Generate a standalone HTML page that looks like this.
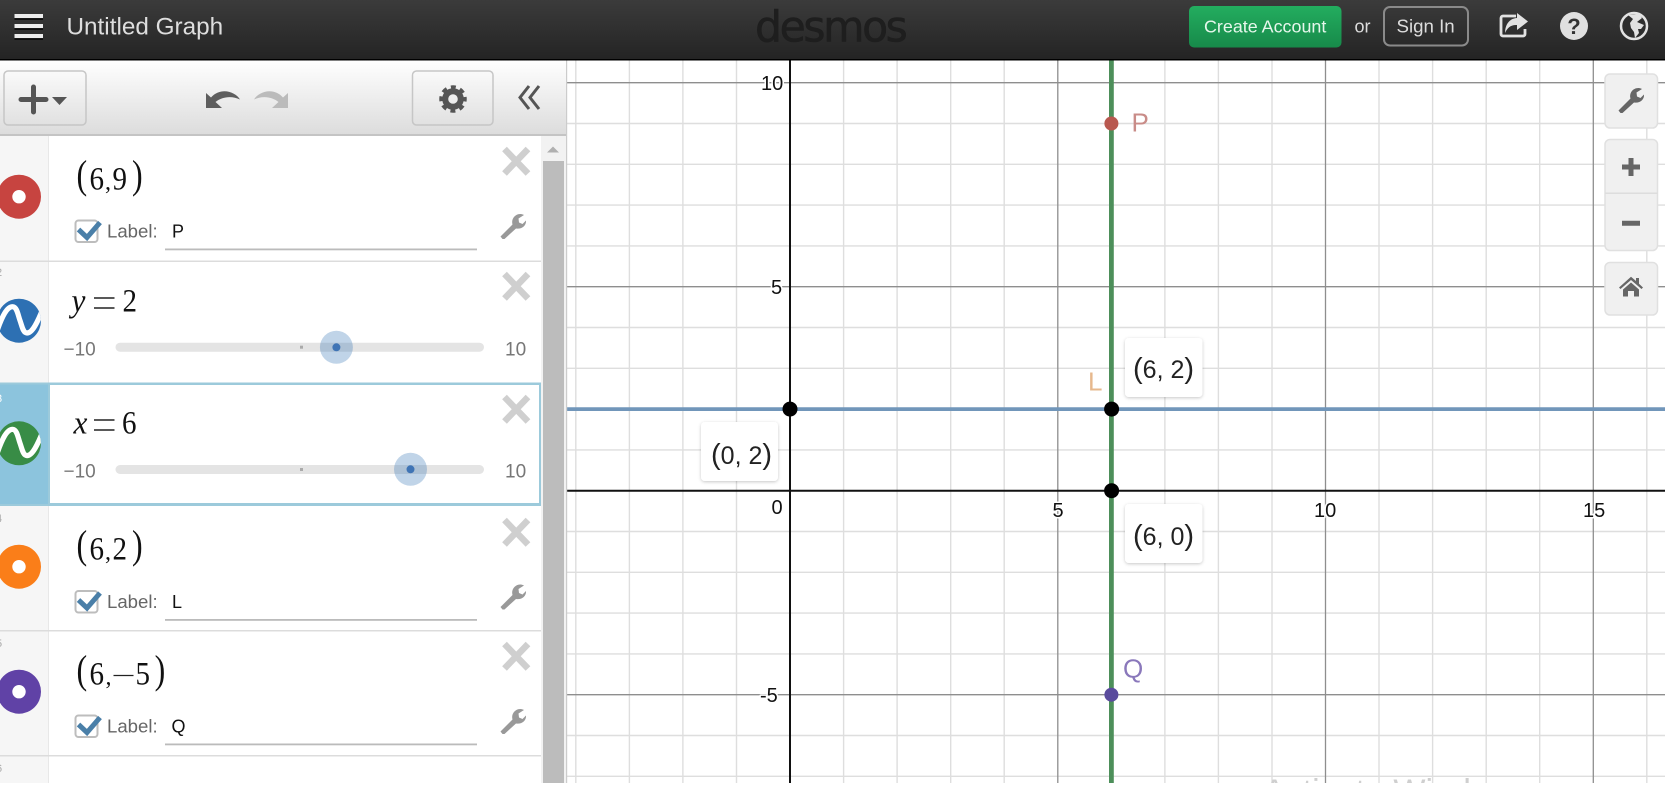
<!DOCTYPE html>
<html lang="en"><head><meta charset="utf-8"><title>Untitled Graph - Desmos</title>
<style>
html,body{margin:0;padding:0;background:#fff;width:1672px;height:804px;overflow:hidden}
svg{display:block;position:absolute;left:0;top:0}
text{font-family:"Liberation Sans",sans-serif}
.m{font-family:"Liberation Serif",serif;font-size:33px;fill:#111}
.c{font-family:"Liberation Serif",serif;font-size:24px;fill:#111}
.p{font-family:"Liberation Serif",serif;font-size:40px;fill:#111}
.l{font-size:18.6px;fill:#666}
.v{font-size:18px;fill:#111}
.s{font-size:19px;fill:#777}
.a{font-size:20px;fill:#111;stroke:#fff;stroke-width:3px;paint-order:stroke;stroke-linejoin:round}
.b{font-size:25px;fill:#222}
.b tspan{font-size:29px;font-weight:normal}
.n{font-size:11px;fill:#aaa}
</style></head><body>
<svg width="1672" height="804" viewBox="0 0 1672 804" xmlns="http://www.w3.org/2000/svg">
<defs>
<linearGradient id="hd" x1="0" y1="0" x2="0" y2="1"><stop offset="0" stop-color="#3b3b3b"/><stop offset="1" stop-color="#242424"/></linearGradient>
<linearGradient id="tb" x1="0" y1="0" x2="0" y2="1"><stop offset="0" stop-color="#fff"/><stop offset="1" stop-color="#dcdcdc"/></linearGradient>
<linearGradient id="gr" x1="0" y1="0" x2="0" y2="1"><stop offset="0" stop-color="#23ad5f"/><stop offset="1" stop-color="#178a4a"/></linearGradient>
<path id="wr" d="M2.500 25.500 L0.500 23 L12.500 11 C11 6 14.500 0.500 20.500 0.500 C22 0.500 23 1 24 1.500 L18.500 5 L19 9 L22.500 10.500 L26 7 C26.500 12 22 16 16 15 L4.500 25.500 Z"/>
<path id="xx" d="M2 2 L25.500 26.500 M25.500 2 L2 26.500" fill="none" stroke="#cfcfcf" stroke-width="6.500"/>
<clipPath id="pg"><rect x="0" y="0" width="1665" height="783"/></clipPath>
<clipPath id="gc"><rect x="566" y="60" width="1099" height="723"/></clipPath>
<clipPath id="c2"><circle cx="19" cy="320.700" r="22"/></clipPath>
<clipPath id="c3"><circle cx="19" cy="443.300" r="22"/></clipPath>
<filter id="sh" x="-10%" y="-10%" width="120%" height="125%"><feDropShadow dx="0" dy="1" stdDeviation="1.500" flood-color="#000" flood-opacity=".22"/></filter>
</defs>

<g clip-path="url(#pg)">
<!-- graph -->
<rect x="566" y="60" width="1099" height="723" fill="#fff"/>
<g clip-path="url(#gc)" fill="none">
<path stroke="#dedede" stroke-width="1.400" d="M575.800 60V783M629.400 60V783M682.900 60V783M736.500 60V783M843.600 60V783M897.100 60V783M950.700 60V783M1004.200 60V783M1164.900 60V783M1218.400 60V783M1272 60V783M1379 60V783M1432.600 60V783M1486.200 60V783M1539.700 60V783M1646.800 60V783M567 123.500H1665M567 164.300H1665M567 205.100H1665M567 245.900H1665M567 327.500H1665M567 368.300H1665M567 449.900H1665M567 531.500H1665M567 572.300H1665M567 613.100H1665M567 653.900H1665M567 735.500H1665M567 776.300H1665"/>
<path stroke="#8e8e8e" stroke-width="1.300" d="M1057.800 60V783M1325.500 60V783M1593.300 60V783M567 82.700H1665M567 286.700H1665M567 694.700H1665"/>
<path stroke="#111" stroke-width="2" d="M790 60V783M567 490.700H1665"/>
<path stroke="#7196ba" stroke-width="3.800" d="M567 409.100H1665"/>
<path stroke="#4d8f5a" stroke-width="4.800" d="M1111.400 60V783"/>
</g>
<text x="1263" y="803" font-size="34" fill="#cfcfcf" clip-path="url(#gc)">Activate Windows</text>

<text class="a" x="761" y="90">10</text>
<text class="a" x="771" y="294">5</text>
<text class="a" x="760" y="702">-5</text>
<text class="a" x="771.500" y="514">0</text>
<text class="a" x="1052.500" y="517">5</text>
<text class="a" x="1314" y="517">10</text>
<text class="a" x="1583" y="517">15</text>

<circle cx="1111.400" cy="123.500" r="7" fill="#b8584f"/>
<circle cx="1111.400" cy="694.700" r="7" fill="#5a4b9d"/>
<text x="1131.500" y="131.700" font-size="26" fill="#c98c88">P</text>
<text x="1123" y="677.500" font-size="26" fill="#8a78bb">Q</text>
<text x="1088" y="390.700" font-size="26" fill="#e6b88d">L</text>

<circle cx="790" cy="409.100" r="7.500" fill="#000"/>
<circle cx="1111.600" cy="409.100" r="7.500" fill="#000"/>
<circle cx="1111.600" cy="490.700" r="7.500" fill="#000"/>

<g fill="#fff" filter="url(#sh)">
<rect x="1125" y="338" width="77.500" height="59" rx="4"/>
<rect x="701" y="422" width="77" height="59" rx="4"/>
<rect x="1125" y="504" width="77.500" height="59" rx="4"/>
</g>
<text class="b" x="1133" y="378"><tspan>(</tspan>6, 2<tspan>)</tspan></text>
<text class="b" x="711" y="464"><tspan>(</tspan>0, 2<tspan>)</tspan></text>
<text class="b" x="1133" y="545"><tspan>(</tspan>6, 0<tspan>)</tspan></text>

<!-- graph controls -->
<g fill="#f0f0f0" stroke="#e0e0e0" stroke-width="1.500">
<rect x="1605" y="74" width="52.500" height="54" rx="5"/>
<rect x="1605" y="139.500" width="52.500" height="111" rx="5"/>
<rect x="1605" y="262.500" width="52.500" height="52.500" rx="5"/>
</g>
<path d="M1605 193.300H1657.500" stroke="#ddd" stroke-width="1.500"/>
<use href="#wr" x="1618" y="87.500" fill="#666"/>
<path d="M1631 158V176M1622 167H1640M1622 223.300H1640" stroke="#666" stroke-width="5" fill="none"/>
<path d="M1619 287.500 L1631 276.700 L1636 281 V278 H1639 V283.700 L1643 287.500 L1641.500 289 L1631 280 L1620.500 289 Z M1623 289.500 L1631 282.500 L1639 289.500 V296.500 H1634 V291 H1628 V296.500 H1623 Z" fill="#666"/>

<!-- toolbar -->
<rect x="0" y="60" width="567" height="75" fill="url(#tb)"/>
<rect x="0" y="134" width="567" height="2" fill="#c4c4c4"/>
<rect x="566" y="60" width="1.200" height="723" fill="#ccc"/>
<rect x="4" y="71" width="82" height="54" rx="4" fill="none" stroke="#c6c6c6" stroke-width="1.500"/>
<rect x="412.500" y="71" width="80.500" height="54" rx="4" fill="none" stroke="#c6c6c6" stroke-width="1.500"/>
<path d="M33.500 87V112M21 99.500H46" stroke="#555" stroke-width="5" stroke-linecap="round"/>
<path d="M52 97H67L59.500 105Z" fill="#555"/>
<path d="M206 93 V108 H222 L215.500 102 C222 96.500 232 95.500 240 99.500 C235 91 220 87 211 97.500 Z" fill="#5e5e5e"/>
<path d="M288 93 V108 H272 L278.500 102 C272 96.500 262 95.500 254 99.500 C259 91 274 87 283 97.500 Z" fill="#bbb"/>
<circle cx="453" cy="99" r="7.800" fill="none" stroke="#555" stroke-width="6"/>
<circle cx="453" cy="99" r="12" fill="none" stroke="#555" stroke-width="3.500" stroke-dasharray="5 4.420" stroke-dashoffset="2.500"/>
<path d="M529 86 L520 97.500 L529 109M539 86 L530 97.500 L539 109" fill="none" stroke="#555" stroke-width="3"/>

<!-- list -->
<rect x="0" y="136" width="541" height="647" fill="#fff"/>
<rect x="0" y="136" width="48" height="647" fill="#f6f6f6"/>
<rect x="48" y="136" width="1" height="647" fill="#e8e8e8"/>
<rect x="541" y="136" width="25" height="647" fill="#f2f2f2"/>
<rect x="543" y="161" width="21" height="622" fill="#bcbcbc"/>
<path d="M547 152.500H559L553 146.500Z" fill="#b0b0b0"/>
<g fill="#dcdcdc">
<rect x="0" y="260.500" width="541" height="1.500"/>
<rect x="0" y="630" width="541" height="1.500"/>
<rect x="0" y="755" width="541" height="1.500"/>
</g>
<!-- focused row -->
<rect x="0" y="383" width="48" height="122" fill="#8cc4dd"/>
<rect x="49" y="384" width="491" height="120" fill="#fff" stroke="#9ccadb" stroke-width="2"/>
<rect x="0" y="382.500" width="541" height="2" fill="#9ccadb"/>
<rect x="0" y="504" width="541" height="2" fill="#9ccadb"/>

<!-- row numbers -->
<text class="n" x="-4" y="276">2</text>
<text class="n" x="-4" y="402" style="fill:#fff">3</text>
<text class="n" x="-4" y="522">4</text>
<text class="n" x="-4" y="647">5</text>
<text class="n" x="-4" y="772">6</text>

<!-- circles -->
<circle cx="19" cy="196.700" r="22" fill="#c74440"/><circle cx="19" cy="196.700" r="6.700" fill="#fff"/>
<circle cx="19" cy="320.700" r="22" fill="#2d70b3"/>
<path clip-path="url(#c2)" d="M-4 334 C2 316 7 306.500 12.700 306.700 C17 307 18 315 20 320.500 C22 326 23 333 27 333 C32 333 37 324 44 306" fill="none" stroke="#fff" stroke-width="5.200"/>
<circle cx="19" cy="443.300" r="22" fill="#388c46"/>
<path clip-path="url(#c3)" d="M-4 456.600 C2 438.600 7 429.100 12.700 429.300 C17 429.600 18 437.600 20 443.100 C22 448.600 23 455.600 27 455.600 C32 455.600 37 446.600 44 428.600" fill="none" stroke="#fff" stroke-width="5.200"/>
<circle cx="19" cy="566.700" r="22" fill="#fa7e19"/><circle cx="19" cy="566.700" r="6.700" fill="#fff"/>
<circle cx="19" cy="691.700" r="22" fill="#6042a6"/><circle cx="19" cy="691.700" r="6.700" fill="#fff"/>

<!-- X -->
<use href="#xx" x="502.500" y="147"/>
<use href="#xx" x="502.500" y="272"/>
<use href="#xx" x="502.500" y="395"/>
<use href="#xx" x="502.500" y="518"/>
<use href="#xx" x="502.500" y="642"/>

<!-- math rows -->
<text class="p" transform="translate(76.500 188) scale(.8 1)">(</text><text class="m" transform="translate(89.500 189.300) scale(.88 1)">6</text><text class="c" x="105" y="189.300">,</text><text class="m" transform="translate(112.500 189.300) scale(.88 1)">9</text><text class="p" transform="translate(132 188) scale(.8 1)">)</text>
<text class="p" transform="translate(76.500 558) scale(.8 1)">(</text><text class="m" transform="translate(89.500 559.300) scale(.88 1)">6</text><text class="c" x="105" y="559.300">,</text><text class="m" transform="translate(112.500 559.300) scale(.88 1)">2</text><text class="p" transform="translate(132 558) scale(.8 1)">)</text>
<text class="p" transform="translate(76.500 683) scale(.8 1)">(</text><text class="m" transform="translate(89.500 684.300) scale(.88 1)">6</text><text class="c" x="105.500" y="684.300">,</text><path d="M113.500 675.500H133.500" stroke="#222" stroke-width="1.300"/><text class="m" transform="translate(135.500 684.300) scale(.88 1)">5</text><text class="p" transform="translate(154.600 683) scale(.8 1)">)</text>

<text class="m" transform="translate(71.500 311.700) scale(.95 1)" font-style="italic">y</text>
<path d="M94 298H114.500M94 308H114.500" stroke="#222" stroke-width="1.500"/>
<text class="m" transform="translate(122.500 311.700) scale(.88 1)">2</text>
<text class="m" transform="translate(73.500 433.300) scale(.95 1)" font-style="italic">x</text>
<path d="M94 420H114.500M94 430H114.500" stroke="#222" stroke-width="1.500"/>
<text class="m" transform="translate(122 433.300) scale(.88 1)">6</text>

<!-- sliders -->
<g>
<text class="s" x="63.500" y="355.300">−10</text><text class="s" x="505" y="355.300">10</text>
<rect x="115.500" y="342.700" width="368.500" height="9" rx="4.500" fill="#e4e4e4"/>
<rect x="300" y="345.700" width="3" height="3" fill="#aaa"/>
<circle cx="336.400" cy="347.300" r="16.500" fill="#2d70b3" fill-opacity=".3"/>
<circle cx="336.400" cy="347.300" r="4" fill="#3f74b5"/>
<text class="s" x="63.500" y="477.600">−10</text><text class="s" x="505" y="477.600">10</text>
<rect x="115.500" y="465" width="368.500" height="9" rx="4.500" fill="#e4e4e4"/>
<rect x="300" y="468" width="3" height="3" fill="#aaa"/>
<circle cx="410.500" cy="469.300" r="16.500" fill="#2d70b3" fill-opacity=".3"/>
<circle cx="410.500" cy="469.300" r="4" fill="#3f74b5"/>
</g>

<!-- label rows -->
<g>
<rect x="75.500" y="220.500" width="22" height="21.500" rx="3" fill="#fff" stroke="#bdbdbd" stroke-width="2"/>
<path d="M78.500 229.500 L87 237.500 L100 222.500" fill="none" stroke="#4a7fa8" stroke-width="5"/>
<text class="l" x="107" y="237.300">Label:</text>
<text class="v" x="172" y="237.300">P</text>
<rect x="165" y="248.500" width="312" height="1.800" fill="#bbb"/>
<use href="#wr" x="500" y="213.500" fill="#999"/>
</g>
<g transform="translate(0 370.500)">
<rect x="75.500" y="220.500" width="22" height="21.500" rx="3" fill="#fff" stroke="#bdbdbd" stroke-width="2"/>
<path d="M78.500 229.500 L87 237.500 L100 222.500" fill="none" stroke="#4a7fa8" stroke-width="5"/>
<text class="l" x="107" y="237.300">Label:</text>
<text class="v" x="172" y="237.300">L</text>
<rect x="165" y="248.500" width="312" height="1.800" fill="#bbb"/>
<use href="#wr" x="500" y="213.500" fill="#999"/>
</g>
<g transform="translate(0 495)">
<rect x="75.500" y="220.500" width="22" height="21.500" rx="3" fill="#fff" stroke="#bdbdbd" stroke-width="2"/>
<path d="M78.500 229.500 L87 237.500 L100 222.500" fill="none" stroke="#4a7fa8" stroke-width="5"/>
<text class="l" x="107" y="237.300">Label:</text>
<text class="v" x="171.500" y="237.300">Q</text>
<rect x="165" y="248.500" width="312" height="1.800" fill="#bbb"/>
<use href="#wr" x="500" y="213.500" fill="#999"/>
</g>

<!-- header -->
<rect x="0" y="0" width="1665" height="59" fill="url(#hd)"/>
<rect x="0" y="59" width="1665" height="1.500" fill="#000"/>
<g fill="#ececec"><rect x="14.500" y="14" width="28.500" height="4.200"/><rect x="14.500" y="24" width="28.500" height="4.200"/><rect x="14.500" y="34" width="28.500" height="4.200"/></g>
<g fill="#000"><rect x="14.500" y="18.200" width="28.500" height="1.500"/><rect x="14.500" y="28.200" width="28.500" height="1.500"/><rect x="14.500" y="38.200" width="28.500" height="1.500"/></g>
<text x="66.500" y="34.500" font-size="24.300" fill="#dedede">Untitled Graph</text>
<text x="755" y="41.500" style="font-family:'DejaVu Sans',sans-serif;font-size:42.500px;letter-spacing:-2.400px;stroke:#1e1e1e;stroke-width:.6px" fill="#1e1e1e">desmos</text>
<rect x="1189" y="6" width="152.500" height="41.500" rx="5" fill="url(#gr)"/>
<text x="1204" y="32.700" font-size="17.900" fill="#e6f7ec">Create Account</text>
<text x="1354.500" y="32.700" font-size="18" fill="#ddd">or</text>
<rect x="1384" y="7" width="84" height="38.500" rx="6" fill="none" stroke="#8a8a8a" stroke-width="2"/>
<text x="1396.500" y="32.700" font-size="18.700" fill="#ddd">Sign In</text>
<!-- share -->
<path d="M1516 16H1503a2 2 0 0 0-2 2V34a2 2 0 0 0 2 2H1523a2 2 0 0 0 2-2V29" fill="none" stroke="#e2e2e2" stroke-width="2.800"/>
<path d="M1517 13 L1528 21.500 L1517 30 V25 C1511 24.500 1507 28 1505 33 C1505 25 1509 18.500 1517 18 Z" fill="#e2e2e2"/>
<!-- help -->
<circle cx="1574" cy="26" r="14" fill="#e0e0e0"/>
<text x="1574" y="34" text-anchor="middle" font-size="22" font-weight="bold" fill="#333">?</text>
<!-- globe -->
<circle cx="1634" cy="26" r="13" fill="#2e2e2e" stroke="#e2e2e2" stroke-width="2.500"/>
<path d="M1628 15 L1639 14 L1642 18 L1637 22 L1644 25 L1641 29 L1638 29 L1639 33 L1635 38 L1634 32 L1631 28 L1630 23 L1633 19 Z" fill="#e2e2e2"/>
</g>
</svg>
</body></html>
